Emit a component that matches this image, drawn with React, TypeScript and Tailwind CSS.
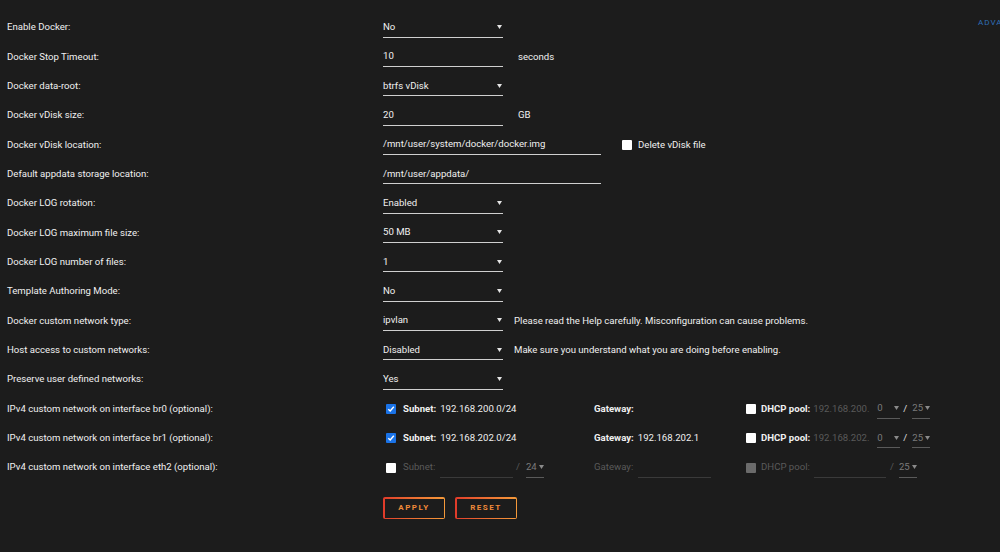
import type { ReactNode } from "react";

const font = { fontFamily: "Roboto, 'Liberation Sans', sans-serif" };

function Arrow({ dim = false }: { dim?: boolean }) {
  return (
    <svg width="5" height="4" viewBox="0 0 5 4" className="shrink-0">
      <path d="M0 0h5L2.5 4z" fill={dim ? "#8a8a8a" : "#e4e4e4"} />
    </svg>
  );
}

function Select({ value, width = "w-[120px]" }: { value: string; width?: string }) {
  return (
    <div className={`${width} h-[20px] flex items-center justify-between border-b border-[#cfcfcf] pr-[1px] text-[#f0f0f0]`}>
      <span>{value}</span>
      <Arrow />
    </div>
  );
}

function TextInput({ value, width = "w-[120px]" }: { value: string; width?: string }) {
  return (
    <div className={`${width} h-[20px] flex items-center border-b border-[#cfcfcf] text-[#f0f0f0]`}>
      {value}
    </div>
  );
}

function Checkbox({ kind }: { kind: "checked" | "empty" | "disabled" }) {
  if (kind === "checked") {
    return (
      <span className="w-[10px] h-[10px] rounded-[1px] bg-[#1a73e8] flex items-center justify-center shrink-0">
        <svg width="8" height="8" viewBox="0 0 8 8">
          <path d="M1.3 4.2 3.2 6 6.8 1.8" stroke="#fff" strokeWidth="1.4" fill="none" />
        </svg>
      </span>
    );
  }
  return (
    <span
      className={`block w-[10px] h-[10px] rounded-[1px] shrink-0 ${kind === "empty" ? "bg-white" : "bg-[#6b6b6b]"}`}
    />
  );
}

function Row({ label, children }: { label: string; children?: ReactNode }) {
  return (
    <div className="flex items-center h-[29.33px]">
      <div className="w-[383px] pl-[7px] shrink-0 text-[#f0f0f0]">{label}</div>
      <div className="flex items-center">{children}</div>
    </div>
  );
}

function NetRow({ iface, subnet, gateway, pool }: { iface: string; subnet: string; gateway?: string; pool: string }) {
  return (
    <Row label={`IPv4 custom network on interface ${iface} (optional):`}>
      <div className="w-[211px] flex items-center pl-[3px]">
        <Checkbox kind="checked" />
        <span className="ml-[7px] font-bold">Subnet:</span>
        <span className="ml-[4px]">{subnet}</span>
      </div>
      <div className="w-[152px] flex items-center">
        <span className="font-bold">Gateway:</span>
        {gateway && <span className="ml-[4px]">{gateway}</span>}
      </div>
      <div className="flex items-center">
        <Checkbox kind="empty" />
        <span className="ml-[5px] font-bold">DHCP pool:</span>
        <span className="ml-[3px] w-[64px] text-[#5a5a5a]">{pool}</span>
        <div className="w-[23px] h-[20px] flex items-center justify-between border-b border-[#5a5a5a] pr-[1px] text-[#7a7a7a]">
          <span>0</span>
          <Arrow dim />
        </div>
        <span className="ml-[3px] text-[#e0e0e0]">/</span>
        <div className="ml-[5px] w-[18px] h-[20px] flex items-center gap-[2px] border-b border-[#5a5a5a] text-[#7a7a7a]">
          <span>25</span>
          <Arrow dim />
        </div>
      </div>
    </Row>
  );
}

export default function App() {
  return (
    <div
      className="relative w-[1000px] h-[552px] overflow-hidden bg-[#1c1c1c] text-[9.6px] text-[#f0f0f0] pt-[13px]"
      style={font}
    >
      <div className="absolute left-[978px] top-[17px] whitespace-nowrap text-[8px] tracking-[1px] text-[#2f6fb8]">
        ADVANCED VIEW
      </div>

      <Row label="Enable Docker:">
        <Select value="No" />
      </Row>
      <Row label="Docker Stop Timeout:">
        <TextInput value="10" />
        <span className="ml-[15px]">seconds</span>
      </Row>
      <Row label="Docker data-root:">
        <Select value="btrfs vDisk" />
      </Row>
      <Row label="Docker vDisk size:">
        <TextInput value="20" />
        <span className="ml-[15px]">GB</span>
      </Row>
      <Row label="Docker vDisk location:">
        <TextInput value="/mnt/user/system/docker/docker.img" width="w-[218px]" />
        <span className="ml-[21px] flex">
          <Checkbox kind="empty" />
        </span>
        <span className="ml-[6px]">Delete vDisk file</span>
      </Row>
      <Row label="Default appdata storage location:">
        <TextInput value="/mnt/user/appdata/" width="w-[218px]" />
      </Row>
      <Row label="Docker LOG rotation:">
        <Select value="Enabled" />
      </Row>
      <Row label="Docker LOG maximum file size:">
        <Select value="50 MB" />
      </Row>
      <Row label="Docker LOG number of files:">
        <Select value="1" />
      </Row>
      <Row label="Template Authoring Mode:">
        <Select value="No" />
      </Row>
      <Row label="Docker custom network type:">
        <Select value="ipvlan" />
        <span className="ml-[11px]">Please read the Help carefully. Misconfiguration can cause problems.</span>
      </Row>
      <Row label="Host access to custom networks:">
        <Select value="Disabled" />
        <span className="ml-[11px]">Make sure you understand what you are doing before enabling.</span>
      </Row>
      <Row label="Preserve user defined networks:">
        <Select value="Yes" />
      </Row>

      <NetRow iface="br0" subnet="192.168.200.0/24" pool="192.168.200." />
      <NetRow iface="br1" subnet="192.168.202.0/24" gateway="192.168.202.1" pool="192.168.202." />

      <Row label="IPv4 custom network on interface eth2 (optional):">
        <div className="w-[211px] flex items-center pl-[3px] text-[#5a5a5a]">
          <Checkbox kind="empty" />
          <span className="ml-[7px] w-[34px]">Subnet:</span>
          <span className="ml-[3px] w-[73px] h-[20px] border-b border-[#3a3a3a]" />
          <span className="ml-[3px]">/</span>
          <div className="ml-[6px] w-[18px] h-[20px] flex items-center gap-[2px] border-b border-[#5a5a5a] text-[#7a7a7a]">
            <span>24</span>
            <Arrow dim />
          </div>
        </div>
        <div className="w-[152px] flex items-center text-[#5a5a5a]">
          <span className="w-[44px]">Gateway:</span>
          <span className="w-[73px] h-[20px] border-b border-[#3a3a3a]" />
        </div>
        <div className="flex items-center text-[#5a5a5a]">
          <Checkbox kind="disabled" />
          <span className="ml-[5px] w-[53px]">DHCP pool:</span>
          <span className="w-[72px] h-[20px] border-b border-[#3a3a3a]" />
          <span className="ml-[4px]">/</span>
          <div className="ml-[5px] w-[18px] h-[20px] flex items-center gap-[2px] border-b border-[#5a5a5a] text-[#7a7a7a]">
            <span>25</span>
            <Arrow dim />
          </div>
        </div>
      </Row>

      <div className="flex gap-[10px] pl-[383px] mt-[15px]">
        {["APPLY", "RESET"].map((t) => (
          <div
            key={t}
            className="p-[1.5px] rounded-[2px] bg-gradient-to-r from-[#e03a2a] to-[#f59a3a]"
          >
            <div className="w-[59px] h-[19px] bg-[#1c1c1c] flex items-center justify-center text-[8px] font-bold tracking-[1.5px] text-[#f08a3a]">
              {t}
            </div>
          </div>
        ))}
      </div>
    </div>
  );
}
